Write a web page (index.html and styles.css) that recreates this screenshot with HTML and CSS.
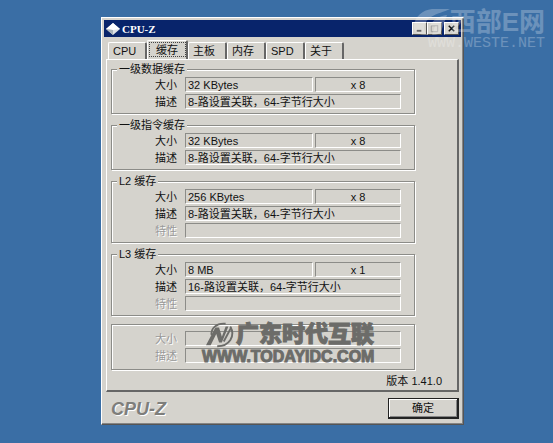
FILE: index.html
```html
<!DOCTYPE html>
<html lang="zh-CN">
<head>
    <meta charset="utf-8">
    <title>CPU-Z</title>
    <link rel="stylesheet" href="styles.css">
</head>
<body>
    <div class="window">
        <div class="titlebar">
            <svg class="app-icon" viewBox="0 0 14 14" aria-hidden="true">
                <path d="M7 1L14 7L7 13L0 7Z" fill="#dfe3e6"/>
                <path d="M7 1L14 7L7 8L0 7Z" fill="#fff"/>
                <path d="M0 7L7 13L7 8Z" fill="#aab4bc"/>
            </svg>
            <h1 class="title">CPU-Z</h1>
            <button class="control" type="button" aria-label="最小化">
                <svg viewBox="0 0 14 12"><path d="M4 8.5H9" stroke="#333" stroke-width="2"/></svg>
            </button>
            <button class="control" type="button" aria-label="最大化" disabled>
                <svg viewBox="0 0 14 12"><path d="M3.500 3H10.500M3.500 2.500V9.500H10.500V2.500" fill="none" stroke="#999"/></svg>
            </button>
            <button class="control close" type="button" aria-label="关闭">
                <svg viewBox="0 0 14 12"><path d="M4 3L10 9M10 3L4 9" stroke="#111" stroke-width="1.600"/></svg>
            </button>
        </div>

        <div class="tabs" role="tablist">
            <button class="tab" type="button" role="tab">CPU</button>
            <button class="tab active" type="button" role="tab" aria-selected="true">缓存</button>
            <button class="tab" type="button" role="tab">主板</button>
            <button class="tab" type="button" role="tab">内存</button>
            <button class="tab" type="button" role="tab">SPD</button>
            <button class="tab" type="button" role="tab">关于</button>
        </div>

        <div class="panel">
            <fieldset class="group">
                <legend>一级数据缓存</legend>
                <div class="row">
                    <label for="l1dSize">大小</label>
                    <input class="field" id="l1dSize" value="32 KBytes" readonly>
                    <input class="field count" aria-label="数量" value="x 8" readonly>
                </div>
                <div class="row">
                    <label for="l1dDesc">描述</label>
                    <input class="field" id="l1dDesc" value="8-路设置关联，64-字节行大小" readonly>
                </div>
            </fieldset>

            <fieldset class="group">
                <legend>一级指令缓存</legend>
                <div class="row">
                    <label for="l1iSize">大小</label>
                    <input class="field" id="l1iSize" value="32 KBytes" readonly>
                    <input class="field count" aria-label="数量" value="x 8" readonly>
                </div>
                <div class="row">
                    <label for="l1iDesc">描述</label>
                    <input class="field" id="l1iDesc" value="8-路设置关联，64-字节行大小" readonly>
                </div>
            </fieldset>

            <fieldset class="group">
                <legend>L2 缓存</legend>
                <div class="row">
                    <label for="l2Size">大小</label>
                    <input class="field" id="l2Size" value="256 KBytes" readonly>
                    <input class="field count" aria-label="数量" value="x 8" readonly>
                </div>
                <div class="row">
                    <label for="l2Desc">描述</label>
                    <input class="field" id="l2Desc" value="8-路设置关联，64-字节行大小" readonly>
                </div>
                <div class="row off">
                    <label for="l2Feat">特性</label>
                    <input class="field" id="l2Feat" disabled>
                </div>
            </fieldset>

            <fieldset class="group">
                <legend>L3 缓存</legend>
                <div class="row">
                    <label for="l3Size">大小</label>
                    <input class="field" id="l3Size" value="8 MB" readonly>
                    <input class="field count" aria-label="数量" value="x 1" readonly>
                </div>
                <div class="row">
                    <label for="l3Desc">描述</label>
                    <input class="field" id="l3Desc" value="16-路设置关联，64-字节行大小" readonly>
                </div>
                <div class="row off">
                    <label for="l3Feat">特性</label>
                    <input class="field" id="l3Feat" disabled>
                </div>
            </fieldset>

            <fieldset class="group plain">
                <div class="row off">
                    <label for="exSize">大小</label>
                    <input class="field" id="exSize" disabled>
                </div>
                <div class="row off">
                    <label for="exDesc">描述</label>
                    <input class="field" id="exDesc" disabled>
                </div>
                <div class="stamp">
                    <div class="stamp-name">
                        <svg viewBox="0 0 32 30" aria-hidden="true">
                            <path d="M7 15C6 8 12 2 22 3M27 6C33 16 26 27 13 27" fill="none" stroke="#6c6c69" stroke-width="2"/>
                            <path d="M1 26L11 7L15 7L18 17L22 6L25 6L18 23L15 23L12 14L6 26Z" fill="#6c6c69"/>
                            <path d="M20 22L28 7" stroke="#6c6c69" stroke-width="2"/>
                        </svg>
                        <span>广东时代互联</span>
                    </div>
                    <div class="stamp-url">WWW.TODAYIDC.COM</div>
                </div>
            </fieldset>

            <div class="version">版本 1.41.0</div>
        </div>

        <div class="footer">
            <span class="brand">CPU-Z</span>
            <button class="ok" type="button">确定</button>
        </div>
    </div>

    <div class="site-mark">
        <div class="site-name">
            <svg viewBox="0 0 36 26" aria-hidden="true">
                <path d="M36 0H18C8 1 1 8 0 16C-1 23 4 26 13 26C8 20 10 12 17 8C23 4 30 3 36 0ZM33 6C25 7 18 11 16 17H21L18 26C24 26 27 24 28 20Z" fill="#fff"/>
            </svg>
            <span>西部E网</span>
        </div>
        <div class="site-url">WWW.WESTE.NET</div>
    </div>
</body>
</html>
```
FILE: styles.css
```css
* {
    box-sizing: border-box;
}
body {
    margin: 0;
    padding: 17px 89px 17px 101px;
    background-color: #3a6ea5;
    font-family: "Liberation Sans", "Noto Sans CJK SC", sans-serif;
    font-size: 11px;
    line-height: 16px;
    color: #111;
}
button, input {
    font: inherit;
    color: inherit;
    margin: 0;
    padding: 0;
}
.window {
    background-color: #d5d3cd;
    border: 1px solid #fff;
    border-right-color: #555;
    border-bottom-color: #555;
    box-shadow: inset -1px -1px 0 #858585;
    padding: 2px 4px 5px;
}
.titlebar {
    display: flex;
    align-items: center;
    height: 17px;
    margin: 0 -2px;
    padding: 0 2px;
    background-color: #08246b;
}
.app-icon {
    width: 14px;
    height: 14px;
}
.title {
    flex: 1;
    margin: 0 0 0 2px;
    font-family: "Liberation Serif", serif;
    font-size: 11px;
    color: #fff;
}
.control {
    width: 15px;
    height: 13px;
    background-color: #d5d3cd;
    border: 1px solid #fff;
    border-right-color: #555;
    border-bottom-color: #555;
}
.control svg {
    display: block;
    width: 13px;
    height: 11px;
}
.close {
    margin-left: 2px;
}
.tabs {
    display: flex;
    align-items: flex-end;
    height: 22px;
    padding-left: 2px;
}
.tab {
    width: 39px;
    height: 17px;
    border: 1px solid #fff;
    border-right: 2px solid #666;
    border-bottom: 0;
    border-radius: 2px 2px 0 0;
    background-color: #d5d3cd;
    text-align: left;
    padding-left: 4px;
    line-height: 15px;
}
.tab.active {
    width: 41px;
    height: 19px;
    padding: 0;
    text-align: center;
    outline: 1px dotted #444;
    outline-offset: -3px;
}
.panel {
    border: 1px solid #fff;
    border-right: 2px solid #666;
    border-bottom: 2px solid #666;
    padding: 2px 42px 1px 4px;
}
.group {
    position: relative;
    min-width: 0;
    margin: 0 0 4px;
    padding: 1px 13px 4px 73px;
    border: 1px solid #8c8c88;
    box-shadow: 1px 1px 0 #fff, inset 1px 1px 0 #fff;
}
.group legend {
    height: 14px;
    margin-left: -68px;
    padding: 0 2px;
    background-color: #d5d3cd;
    line-height: 14px;
}
.row {
    display: flex;
    gap: 2px;
    height: 15px;
}
.row + .row {
    margin-top: 2px;
}
.row label {
    width: 28px;
    margin-left: -30px;
    line-height: 17px;
}
.field {
    flex: 1;
    min-width: 0;
    height: 15px;
    padding-left: 2px;
    background: none;
    border: 1px solid #8c8c88;
    border-right-color: #fff;
    border-bottom-color: #fff;
    border-radius: 0;
    outline: 0;
}
.count {
    flex: 0 0 86px;
    padding: 0;
    text-align: center;
}
.off {
    color: #999;
    text-shadow: 1px 1px 0 #fff;
}
.plain {
    margin: 8px 0 3px;
    padding-top: 6px;
    padding-bottom: 6px;
}
.version {
    margin-right: -27px;
    text-align: right;
}
.footer {
    display: flex;
    justify-content: space-between;
    align-items: center;
    padding: 6px 0 0 5px;
}
.brand {
    font-size: 18px;
    font-weight: bold;
    font-style: italic;
    color: #7e7e7b;
    text-shadow: 1px 1px 0 #fff;
}
.ok {
    width: 71px;
    height: 21px;
    background-color: #d5d3cd;
    border: 1px solid #222;
    border-right-width: 2px;
    border-bottom-width: 2px;
    box-shadow: inset 1px 1px 0 #fff, inset -1px -1px 0 #858585;
}
/* marks printed over the window */
.stamp {
    position: absolute;
    left: 90px;
    top: -4px;
    color: #6c6c69;
    font-weight: 900;
    text-shadow: none;
    -webkit-text-stroke: 1px #6c6c69;
    pointer-events: none;
}
.stamp-name {
    display: flex;
    align-items: center;
    padding-left: 2px;
    height: 27px;
    font-size: 23px;
    line-height: 27px;
}
.stamp-name svg {
    width: 32px;
    height: 28px;
}
.stamp-url {
    font-size: 16px;
    line-height: 18px;
}
.site-mark {
    position: absolute;
    top: 7px;
    right: 8px;
    color: #fff;
    opacity: 0.25;
    pointer-events: none;
}
.site-name {
    display: flex;
    align-items: center;
    justify-content: flex-end;
    height: 30px;
    font-size: 26px;
    line-height: 30px;
    font-weight: bold;
}
.site-name svg {
    width: 36px;
    height: 26px;
}
.site-url {
    font-family: "Liberation Mono", monospace;
    font-size: 15px;
    line-height: 14px;
    text-align: right;
}
```
